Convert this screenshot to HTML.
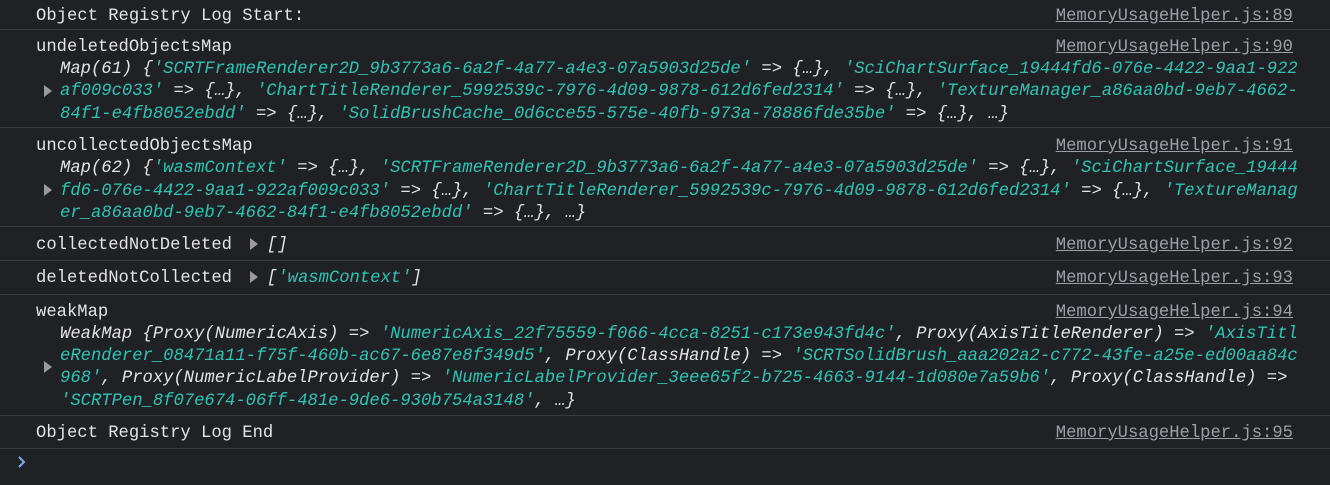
<!DOCTYPE html>
<html><head><meta charset="utf-8"><style>
html,body{margin:0;padding:0;background:#202124;width:1330px;height:485px;overflow:hidden}
body{font-family:"Liberation Mono",monospace;font-size:17.2px;color:#e3e3e3}
#w{position:absolute;left:0;top:0;width:1330px;height:485px}
.l{position:absolute;white-space:pre;line-height:22px;height:22px;margin-top:2px}
.i{font-style:italic}
.c{color:#2ec4b6}
.lk{position:absolute;right:37px;color:#9aa0a6;text-decoration:underline;white-space:pre;line-height:22px;margin-top:2px}
.sep{position:absolute;left:0;width:1330px;height:1px;background:#3a3a3c}
.tri{position:absolute;width:0;height:0;border-top:6px solid transparent;border-bottom:6px solid transparent;border-left:8px solid #9a9a9a;margin-top:1px}
</style></head><body><div id="w">
<div class="l" style="left:36px;top:4px">Object Registry Log Start:</div>
<div class="lk" style="top:4px">MemoryUsageHelper.js:89</div>
<div class="sep" style="top:29px"></div>

<div class="l" style="left:36px;top:35px">undeletedObjectsMap</div>
<div class="lk" style="top:35px">MemoryUsageHelper.js:90</div>
<div class="l i" style="left:60px;top:57px">Map(61) {<span class="c">'SCRTFrameRenderer2D_9b3773a6-6a2f-4a77-a4e3-07a5903d25de'</span> =&gt; {…}, <span class="c">'SciChartSurface_19444fd6-076e-4422-9aa1-922</span></div>
<div class="tri" style="left:44px;top:84px"></div>
<div class="l i" style="left:60px;top:79px"><span class="c">af009c033'</span> =&gt; {…}, <span class="c">'ChartTitleRenderer_5992539c-7976-4d09-9878-612d6fed2314'</span> =&gt; {…}, <span class="c">'TextureManager_a86aa0bd-9eb7-4662-</span></div>
<div class="l i" style="left:60px;top:102px"><span class="c">84f1-e4fb8052ebdd'</span> =&gt; {…}, <span class="c">'SolidBrushCache_0d6cce55-575e-40fb-973a-78886fde35be'</span> =&gt; {…}, …}</div>
<div class="sep" style="top:127px"></div>

<div class="l" style="left:36px;top:134px">uncollectedObjectsMap</div>
<div class="lk" style="top:134px">MemoryUsageHelper.js:91</div>
<div class="l i" style="left:60px;top:156px">Map(62) {<span class="c">'wasmContext'</span> =&gt; {…}, <span class="c">'SCRTFrameRenderer2D_9b3773a6-6a2f-4a77-a4e3-07a5903d25de'</span> =&gt; {…}, <span class="c">'SciChartSurface_19444</span></div>
<div class="tri" style="left:44px;top:183px"></div>
<div class="l i" style="left:60px;top:179px"><span class="c">fd6-076e-4422-9aa1-922af009c033'</span> =&gt; {…}, <span class="c">'ChartTitleRenderer_5992539c-7976-4d09-9878-612d6fed2314'</span> =&gt; {…}, <span class="c">'TextureManag</span></div>
<div class="l i" style="left:60px;top:201px"><span class="c">er_a86aa0bd-9eb7-4662-84f1-e4fb8052ebdd'</span> =&gt; {…}, …}</div>
<div class="sep" style="top:226px"></div>

<div class="l" style="left:36px;top:233px">collectedNotDeleted</div>
<div class="tri" style="left:250px;top:237px"></div>
<div class="l i" style="left:267px;top:233px">[]</div>
<div class="lk" style="top:233px">MemoryUsageHelper.js:92</div>
<div class="sep" style="top:260px"></div>

<div class="l" style="left:36px;top:266px">deletedNotCollected</div>
<div class="tri" style="left:250px;top:270px"></div>
<div class="l i" style="left:267px;top:266px">[<span class="c">'wasmContext'</span>]</div>
<div class="lk" style="top:266px">MemoryUsageHelper.js:93</div>
<div class="sep" style="top:294px"></div>

<div class="l" style="left:36px;top:300px">weakMap</div>
<div class="lk" style="top:300px">MemoryUsageHelper.js:94</div>
<div class="l i" style="left:60px;top:322px">WeakMap {Proxy(NumericAxis) =&gt; <span class="c">'NumericAxis_22f75559-f066-4cca-8251-c173e943fd4c'</span>, Proxy(AxisTitleRenderer) =&gt; <span class="c">'AxisTitl</span></div>
<div class="l i" style="left:60px;top:344px"><span class="c">eRenderer_08471a11-f75f-460b-ac67-6e87e8f349d5'</span>, Proxy(ClassHandle) =&gt; <span class="c">'SCRTSolidBrush_aaa202a2-c772-43fe-a25e-ed00aa84c</span></div>
<div class="tri" style="left:44px;top:360px"></div>
<div class="l i" style="left:60px;top:366px"><span class="c">968'</span>, Proxy(NumericLabelProvider) =&gt; <span class="c">'NumericLabelProvider_3eee65f2-b725-4663-9144-1d080e7a59b6'</span>, Proxy(ClassHandle) =&gt;</div>
<div class="l i" style="left:60px;top:389px"><span class="c">'SCRTPen_8f07e674-06ff-481e-9de6-930b754a3148'</span>, …}</div>
<div class="sep" style="top:415px"></div>

<div class="l" style="left:36px;top:421px">Object Registry Log End</div>
<div class="lk" style="top:421px">MemoryUsageHelper.js:95</div>
<div class="sep" style="top:448px"></div>

<svg style="position:absolute;left:17px;top:455px" width="10" height="14" viewBox="0 0 10 14"><path d="M2 2 L7 7 L2 12" fill="none" stroke="#7cacf8" stroke-width="2"/></svg>
</div></body></html>
